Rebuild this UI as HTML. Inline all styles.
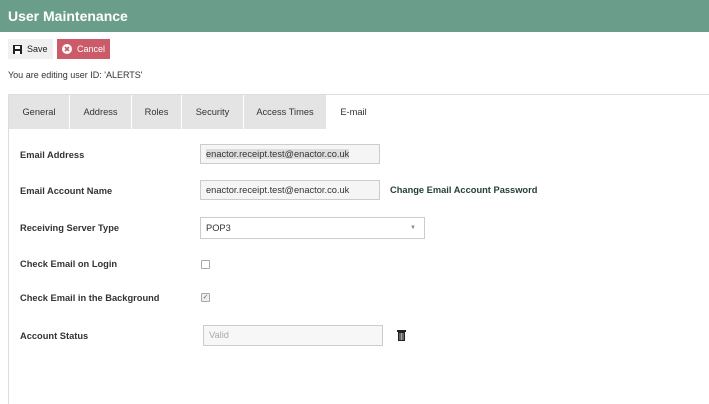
<!DOCTYPE html>
<html><head><style>
body{margin:0;width:709px;height:404px;background:#fff;font-family:"Liberation Sans",sans-serif;color:#222;position:relative;overflow:hidden}
.hdr{position:absolute;left:0;top:0;width:709px;height:32px;background:#6b9e8a;color:#fff;font-weight:bold;font-size:14px;line-height:32px;padding-left:8px;box-sizing:border-box}
.btn{position:absolute;top:39px;height:20px;font-size:9px;line-height:20px;box-sizing:border-box}
.abs{position:absolute}
.tab{position:absolute;top:95px;height:34px;background:#e4e4e4;border-right:1px solid #fff;font-size:9.3px;line-height:34px;text-align:center;color:#333;box-sizing:border-box}
.lbl{position:absolute;left:20px;font-size:9.3px;font-weight:bold;color:#333}
.inp{position:absolute;left:200px;width:180px;height:20px;border:1px solid #ccc;box-sizing:border-box;font-size:9.3px;line-height:18px;padding-left:5px;color:#333;background:#fff}
.cb{position:absolute;left:201px;width:7px;height:7px;border:1px solid #aaa;border-radius:1px;background:#fff}
</style></head><body>
<div class="hdr">User Maintenance</div>
<div class="btn" style="left:8px;width:45px;background:#f0f0f0;padding-left:5px">
<svg width="9" height="9" style="position:absolute;left:5px;top:6px"><rect x="0" y="0" width="9" height="9" fill="#222"/><rect x="2" y="1" width="5" height="3" fill="#fff"/><rect x="2" y="6" width="5" height="3" fill="#fff"/></svg>
<span style="position:absolute;left:19px">Save</span></div>
<div class="btn" style="left:57px;width:53px;background:#cc5b6a;color:#fff">
<svg width="10" height="10" style="position:absolute;left:5px;top:5px"><circle cx="5" cy="5" r="5" fill="#fff"/><path d="M3 3L7 7M7 3L3 7" stroke="#cc5b6a" stroke-width="1.6"/></svg>
<span style="position:absolute;left:20px">Cancel</span></div>
<div class="abs" style="left:8px;top:70px;font-size:9px;color:#333">You are editing user ID: 'ALERTS'</div>
<div class="abs" style="left:8px;top:94px;width:701px;height:1px;background:#ddd"></div>
<div class="abs" style="left:8px;top:94px;width:1px;height:310px;background:#ddd"></div>
<div class="tab" style="left:9px;width:61px">General</div>
<div class="tab" style="left:70px;width:62px">Address</div>
<div class="tab" style="left:132px;width:50px">Roles</div>
<div class="tab" style="left:182px;width:62px">Security</div>
<div class="tab" style="left:244px;width:83px">Access Times</div>
<div class="tab" style="left:327px;width:54px;background:#fff">E-mail</div>
<div class="lbl" style="top:150px">Email Address</div>
<div class="inp" style="top:144px;background:#f5f5f5"><span style="background:#ddd">enactor.receipt.test@enactor.co.uk</span></div>
<div class="lbl" style="top:186px">Email Account Name</div>
<div class="inp" style="top:180px;background:#f5f5f5">enactor.receipt.test@enactor.co.uk</div>
<div class="abs" style="left:390px;top:185px;font-size:9.3px;font-weight:bold;color:#24403a">Change Email Account Password</div>
<div class="lbl" style="top:223px">Receiving Server Type</div>
<div class="inp" style="top:217px;width:225px;height:22px;line-height:20px">POP3<span style="position:absolute;right:8px;top:0;font-size:6px;color:#888">&#9660;</span></div>
<div class="lbl" style="top:259px">Check Email on Login</div>
<div class="cb" style="top:260px"></div>
<div class="lbl" style="top:293px">Check Email in the Background</div>
<div class="cb" style="top:293px;background:#eee;font-size:7px;line-height:7px;text-align:center;color:#666">&#10003;</div>
<div class="lbl" style="top:331px">Account Status</div>
<div class="inp" style="left:203px;top:325px;height:21px;background:#f7f7f7;color:#aaa">Valid</div>
<svg class="abs" style="left:397px;top:330px" width="9" height="11"><rect x="0" y="0" width="9" height="2" fill="#222"/><rect x="3" y="-1" width="3" height="2" fill="#222"/><rect x="1" y="2" width="7" height="9" fill="#222"/><path d="M3 3V10M4.5 3V10M6 3V10" stroke="#fff" stroke-width="0.6"/></svg>
</body></html>
